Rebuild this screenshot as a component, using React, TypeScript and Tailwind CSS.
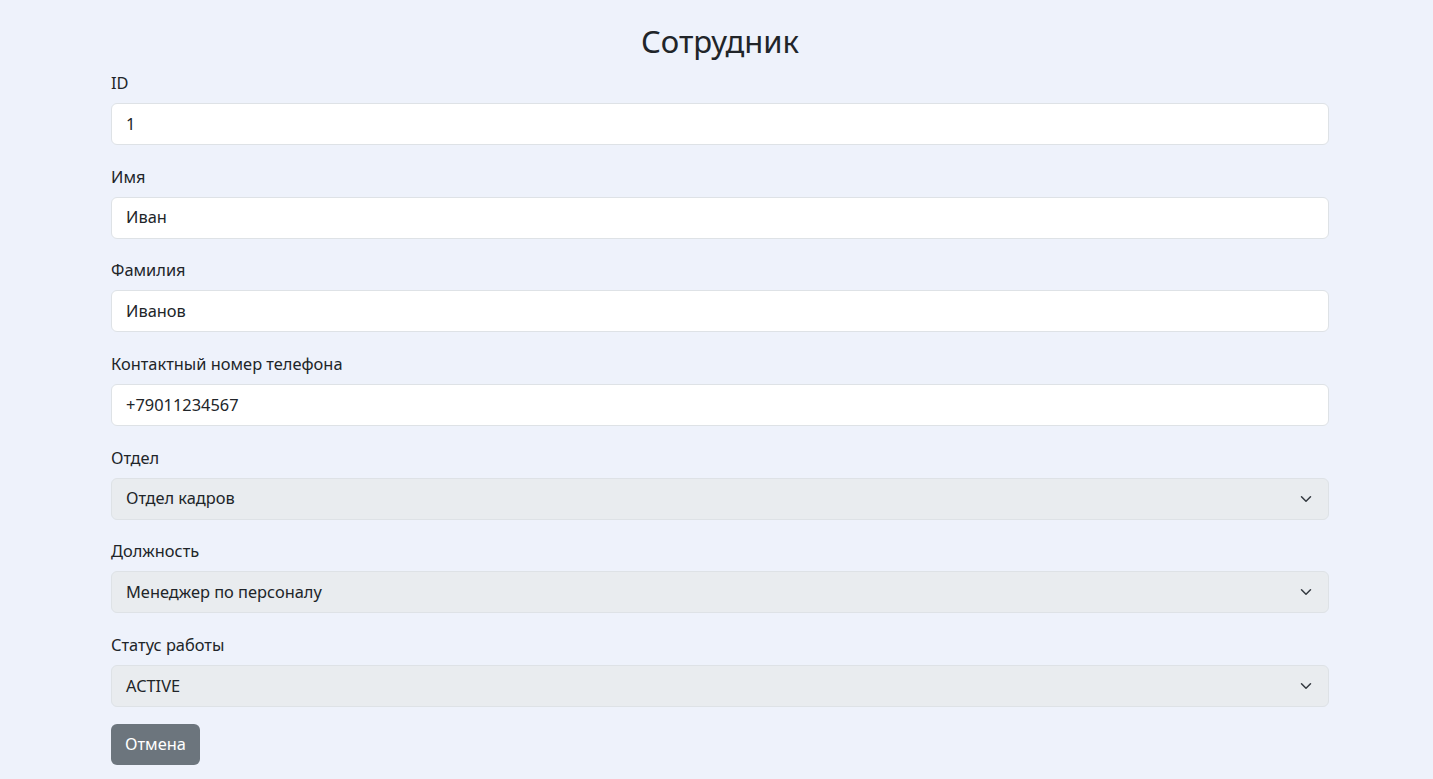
const fields = [
  { label: "ID", value: "1" },
  { label: "Имя", value: "Иван" },
  { label: "Фамилия", value: "Иванов" },
  { label: "Контактный номер телефона", value: "+79011234567" },
];

const selects = [
  { label: "Отдел", value: "Отдел кадров" },
  { label: "Должность", value: "Менеджер по персоналу" },
  { label: "Статус работы", value: "ACTIVE" },
];

function Chevron() {
  return (
    <svg width="16" height="12" viewBox="0 0 16 16" fill="none" className="absolute right-[14px] top-1/2 -translate-y-1/2">
      <path d="m2 5 6 6 6-6" stroke="#343a40" strokeWidth="2" strokeLinecap="round" strokeLinejoin="round" />
    </svg>
  );
}

export default function App() {
  return (
    <div
      className="min-h-screen bg-[#eef2fb] text-[#212529]"
      style={{ fontFamily: '"Noto Sans", "Open Sans", sans-serif' }}
    >
      <div className="ml-[111px] w-[1218px] pt-[22px]">
        <h2 className="text-center text-[31px] leading-[38px] mb-[11px]">Сотрудник</h2>

        {fields.map((f) => (
          <div key={f.label} className="mb-[19.7px]">
            <label className="block text-[16.4px] leading-[24px] mb-[8px]">{f.label}</label>
            <div className="h-[42px] flex items-center px-[14px] bg-white border border-[#dee2e6] rounded-[6px] text-[16.4px]">
              {f.value}
            </div>
          </div>
        ))}

        {selects.map((s) => (
          <div key={s.label} className="mb-[19.7px]">
            <label className="block text-[16.4px] leading-[24px] mb-[8px]">{s.label}</label>
            <div className="relative h-[42px] flex items-center px-[14px] bg-[#e9ecef] border border-[#dee2e6] rounded-[6px] text-[16.4px]">
              {s.value}
              <Chevron />
            </div>
          </div>
        ))}

        <button className="-mt-[3px] h-[41px] px-[14px] bg-[#6c757d] text-white text-[16.4px] rounded-[6px]">
          Отмена
        </button>
      </div>
    </div>
  );
}
